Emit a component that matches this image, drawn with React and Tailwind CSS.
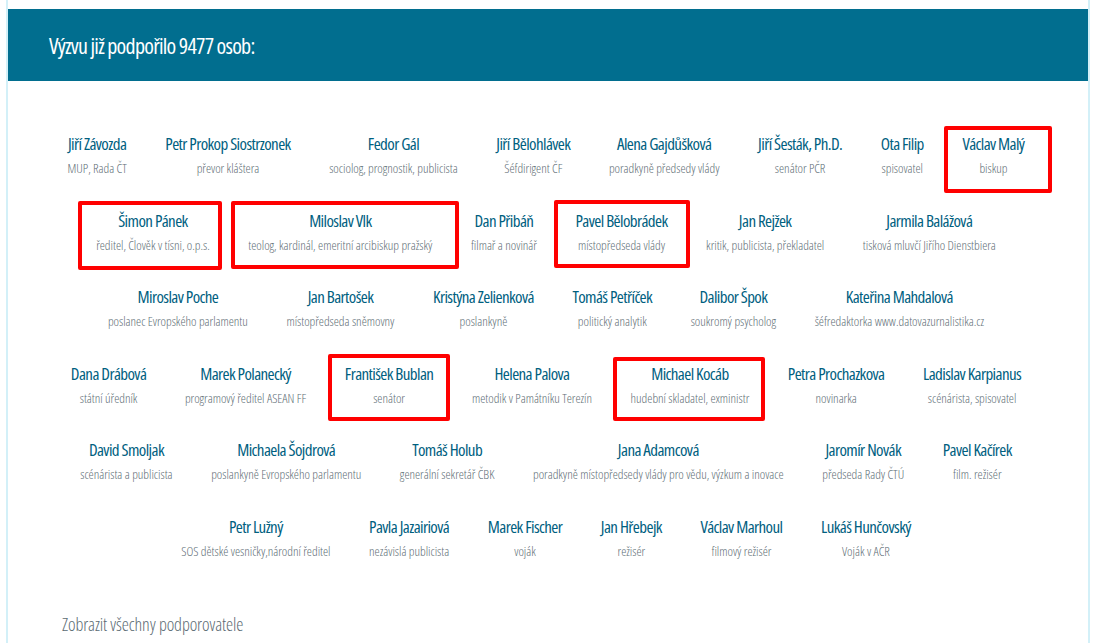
const rows = [
  [["Jiří Závozda","MUP, Rada ČT"],["Petr Prokop Siostrzonek","převor kláštera"],["Fedor Gál","sociolog, prognostik, publicista"],["Jiří Bělohlávek","Šéfdirigent ČF"],["Alena Gajdůšková","poradkyně předsedy vlády"],["Jiří Šesták, Ph.D.","senátor PČR"],["Ota Filip","spisovatel"],["Václav Malý","biskup"]],
  [["Šimon Pánek","ředitel, Člověk v tísni, o.p.s."],["Miloslav Vlk","teolog, kardinál, emeritní arcibiskup pražský"],["Dan Přibáň","filmař a novinář"],["Pavel Bělobrádek","místopředseda vlády"],["Jan Rejžek","kritik, publicista, překladatel"],["Jarmila Balážová","tisková mluvčí Jiřího Dienstbiera"]],
  [["Miroslav Poche","poslanec Evropského parlamentu"],["Jan Bartošek","místopředseda sněmovny"],["Kristýna Zelienková","poslankyně"],["Tomáš Petříček","politický analytik"],["Dalibor Špok","soukromý psycholog"],["Kateřina Mahdalová","šéfredaktorka www.datovazurnalistika.cz"]],
  [["Dana Drábová","státní úředník"],["Marek Polanecký","programový ředitel ASEAN FF"],["František Bublan","senátor"],["Helena Palova","metodik v Památníku Terezín"],["Michael Kocáb","hudební skladatel, exministr"],["Petra Prochazkova","novinarka"],["Ladislav Karpianus","scénárista, spisovatel"]],
  [["David Smoljak","scénárista a publicista"],["Michaela Šojdrová","poslankyně Evropského parlamentu"],["Tomáš Holub","generální sekretář ČBK"],["Jana Adamcová","poradkyně místopředsedy vlády pro vědu, výzkum a inovace"],["Jaromír Novák","předseda Rady ČTÚ"],["Pavel Kačírek","film. režisér"]],
  [["Petr Lužný","SOS dětské vesničky,národní ředitel"],["Pavla Jazairiová","nezávislá publicista"],["Marek Fischer","voják"],["Jan Hřebejk","režisér"],["Václav Marhoul","filmový režisér"],["Lukáš Hunčovský","Voják v AČR"]],
];

function Mark({ className }) {
  return <div className={"absolute border-4 border-[#ff0000] rounded-[2px] " + className} />;
}

export default function App() {
  return (
    <div className="relative h-[643px] overflow-hidden bg-white font-['Open_Sans',sans-serif] [font-stretch:75%]">
      <div className="mx-[6px] h-full border-x-2 border-[#d3f0f8] pt-[9px]">
        <div className="flex h-[72px] items-center bg-[#016e8f] pl-[41px] text-[22px] font-medium tracking-[-0.75px] text-white">
          Výzvu již podpořilo 9477 osob:
        </div>
        <div className="pt-[51px] pr-[4px]">
          {rows.map((row, i) => (
            <div key={i} className="flex h-[76.6px] justify-center">
              {row.map(([name, role]) => (
                <div key={name} className="px-[19.3px] text-center whitespace-nowrap">
                  <div className="text-[17px] font-normal leading-[24px] tracking-[-0.6px] text-[#00607f]">{name}</div>
                  <div className="mt-[4px] text-[13px] font-light leading-[16px] tracking-[-0.02px] text-[#5f6f77]">{role}</div>
                </div>
              ))}
            </div>
          ))}
        </div>
        <div className="mt-[20px] pl-[54px] text-[18px] font-light leading-[24px] tracking-[-0.1px] text-[#5b6b73]">Zobrazit všechny podporovatele</div>
      </div>
      <Mark className="left-[944px] top-[126px] w-[108px] h-[67px]" />
      <Mark className="left-[78px] top-[201px] w-[144px] h-[69px]" />
      <Mark className="left-[231px] top-[201px] w-[228px] h-[68px]" />
      <Mark className="left-[554px] top-[200px] w-[136px] h-[68px]" />
      <Mark className="left-[328px] top-[354px] w-[122px] h-[67px]" />
      <Mark className="left-[613px] top-[357px] w-[152px] h-[64px]" />
    </div>
  );
}
